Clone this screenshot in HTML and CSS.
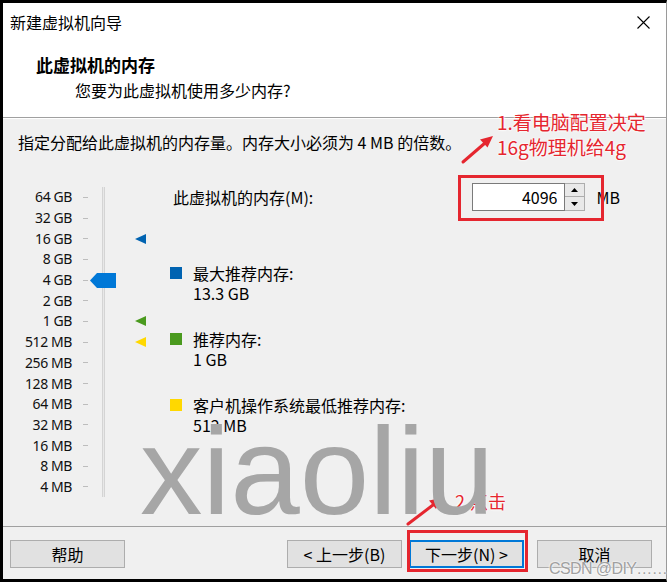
FILE: index.html
```html
<!DOCTYPE html>
<html lang="zh-CN">
<head>
    <meta charset="UTF-8">
    <meta name="viewport" content="width=device-width, initial-scale=1.0">
    <title>新建虚拟机向导</title>
    <link rel="stylesheet" href="styles.css">
</head>
<body>
<div class="stage">

    <div class="window">
        <div class="title-bar">
            <span class="title">新建虚拟机向导</span>
            <svg class="close" width="13" height="13" viewBox="0 0 13 13">
                <path d="M0.5 0.5 L12.5 12.5 M12.5 0.5 L0.5 12.5" stroke="#000" stroke-width="1.1" fill="none"/>
            </svg>
        </div>

        <div class="header">
            <h1>此虚拟机的内存</h1>
            <p>您要为此虚拟机使用多少内存?</p>
        </div>

        <div class="content">
            <p class="intro">指定分配给此虚拟机的内存量。内存大小必须为 4 MB 的倍数。</p>

            <div class="main">
                <!-- 滑块刻度 -->
                <div class="scale">
                    <div class="row"><span class="label">64 GB</span><span class="tick"></span><span class="track"></span><span class="marker"></span></div>
                    <div class="row"><span class="label">32 GB</span><span class="tick"></span><span class="track"></span><span class="marker"></span></div>
                    <div class="row"><span class="label">16 GB</span><span class="tick"></span><span class="track"></span>
                        <span class="marker"><svg width="11" height="10" viewBox="0 0 11 10"><polygon points="0,5 11,0 11,10" fill="#0063b1"/></svg></span></div>
                    <div class="row"><span class="label">8 GB</span><span class="tick"></span><span class="track"></span><span class="marker"></span></div>
                    <div class="row"><span class="label">4 GB</span><span class="tick"></span>
                        <span class="track"><svg class="thumb" width="26" height="15" viewBox="0 0 26 15"><polygon points="0,7.5 7,0 26,0 26,15 7,15" fill="#0078d7"/></svg></span>
                        <span class="marker"></span></div>
                    <div class="row"><span class="label">2 GB</span><span class="tick"></span><span class="track"></span><span class="marker"></span></div>
                    <div class="row"><span class="label">1 GB</span><span class="tick"></span><span class="track"></span>
                        <span class="marker"><svg width="11" height="10" viewBox="0 0 11 10"><polygon points="0,5 11,0 11,10" fill="#4a9a1e"/></svg></span></div>
                    <div class="row"><span class="label">512 MB</span><span class="tick"></span><span class="track"></span>
                        <span class="marker"><svg width="11" height="10" viewBox="0 0 11 10"><polygon points="0,5 11,0 11,10" fill="#ffd800"/></svg></span></div>
                    <div class="row"><span class="label">256 MB</span><span class="tick"></span><span class="track"></span><span class="marker"></span></div>
                    <div class="row"><span class="label">128 MB</span><span class="tick"></span><span class="track"></span><span class="marker"></span></div>
                    <div class="row"><span class="label">64 MB</span><span class="tick"></span><span class="track"></span><span class="marker"></span></div>
                    <div class="row"><span class="label">32 MB</span><span class="tick"></span><span class="track"></span><span class="marker"></span></div>
                    <div class="row"><span class="label">16 MB</span><span class="tick"></span><span class="track"></span><span class="marker"></span></div>
                    <div class="row"><span class="label">8 MB</span><span class="tick"></span><span class="track"></span><span class="marker"></span></div>
                    <div class="row"><span class="label">4 MB</span><span class="tick"></span><span class="track"></span><span class="marker"></span></div>
                </div>

                <div class="details">
                    <div class="memory-row">
                        <span class="memory-label">此虚拟机的内存(M):</span>
                        <div class="spin">
                            <input class="spin-input" type="text" value="4096">
                            <div class="spin-buttons">
                                <span class="spin-btn"><svg width="7" height="4" viewBox="0 0 7 4"><polygon points="0,4 3.5,0 7,4" fill="#000"/></svg></span>
                                <span class="spin-btn"><svg width="7" height="4" viewBox="0 0 7 4"><polygon points="0,0 7,0 3.5,4" fill="#000"/></svg></span>
                            </div>
                        </div>
                        <span class="unit">MB</span>
                    </div>

                    <div class="legend">
                        <div class="legend-item">
                            <span class="swatch swatch-max"></span>
                            <div><p>最大推荐内存:</p><p>13.3 GB</p></div>
                        </div>
                        <div class="legend-item">
                            <span class="swatch swatch-rec"></span>
                            <div><p>推荐内存:</p><p>1 GB</p></div>
                        </div>
                        <div class="legend-item">
                            <span class="swatch swatch-min"></span>
                            <div><p>客户机操作系统最低推荐内存:</p><p>512 MB</p></div>
                        </div>
                    </div>
                </div>
            </div>
        </div>

        <div class="footer">
            <button class="btn">帮助</button>
            <div class="nav-group">
                <button class="btn">&lt; 上一步(B)</button>
                <button class="btn btn-default">下一步(N) &gt;</button>
                <button class="btn btn-cancel">取消</button>
            </div>
        </div>
    </div>

    <!-- 标注 -->
    <div class="note note-one">1.看电脑配置决定<br>16g物理机给4g</div>
    <div class="note note-two">2.点击</div>
    <div class="mark-box box-memory"></div>
    <div class="mark-box box-next"></div>
    <svg class="arrows" width="670" height="582" viewBox="0 0 670 582">
        <line x1="463" y1="162" x2="485" y2="143" stroke="#e5262f" stroke-width="3" stroke-linecap="round"/>
        <polygon points="493,136 487.5,147.5 480,139.5" fill="#e5262f"/>
        <line x1="408" y1="524" x2="433" y2="505" stroke="#e5262f" stroke-width="3" stroke-linecap="round"/>
        <polygon points="441,498 436,509 429,500.5" fill="#e5262f"/>
    </svg>
    <div class="watermark">xiaoliu</div>
    <div class="csdn">CSDN @DIY……</div>

</div>
</body>
</html>
```

FILE: styles.css
```css
:root {
    --window-bg: #f0f0f0;
    --white: #ffffff;
    --line-color: #a0a0a0;
    --button-bg: #e1e1e1;
    --button-border: #adadad;
    --accent: #0078d7;
    --mark-red: #e5262f;
    --font-ui: "Noto Sans CJK SC", "Noto Sans", sans-serif;
}
html, body {
    margin: 0;
    background-color: var(--white);
    font-family: var(--font-ui);
    color: #000;
}
.stage {
    position: relative;
    width: 670px;
    height: 582px;
    overflow: hidden;
}

/* --- VENTANA --- */
.window {
    box-sizing: border-box;
    width: 667px;
    height: 582px;
    border: 3px solid #000;
    border-right: 1px solid #9a9a9a;
    display: flex;
    flex-direction: column;
    background-color: var(--window-bg);
}
.title-bar {
    height: 38px;
    flex: none;
    display: flex;
    align-items: center;
    justify-content: space-between;
    padding: 0 16px 0 7px;
    background-color: var(--white);
    font-size: 16px;
}
.close {
    display: block;
}
.header {
    flex: none;
    padding: 13px 0 16px 33px;
    background-color: var(--white);
    border-bottom: 1px solid var(--line-color);
}
.header h1 {
    margin: 0;
    font-size: 17px;
    font-weight: bold;
    line-height: 22px;
}
.header p {
    margin: 3px 0 0 39px;
    font-size: 16px;
    line-height: 22px;
}

/* --- CONTENIDO --- */
.content {
    flex: 1;
    border-top: 1px solid var(--white);
    padding: 12px 0 0 15px;
    font-size: 16px;
}
.intro {
    margin: 0;
    line-height: 22px;
}
.main {
    display: flex;
    margin-top: 30px;
}
.scale {
    flex: none;
    width: 152px;
    padding-top: 4px;
}
.row {
    display: grid;
    grid-template-columns: 54px 18px 26px 30px;
    height: 20.7px;
    align-items: center;
}
.label {
    text-align: right;
    font-family: "Noto Sans", sans-serif;
    font-size: 14px;
    letter-spacing: -0.4px;
    line-height: 1;
    white-space: nowrap;
    color: #111;
}
.tick {
    width: 5px;
    height: 1px;
    margin-left: 11px;
    background-color: #bdbdbd;
}
.track {
    height: 100%;
    display: flex;
    align-items: center;
    background: linear-gradient(to right,
        transparent 12px, #d4d4d4 12px, #d4d4d4 13px,
        #e8e8e8 13px, #e8e8e8 14px,
        #d4d4d4 14px, #d4d4d4 15px, transparent 15px);
}
.thumb,
.marker svg {
    display: block;
}
.marker {
    padding-left: 19px;
}
.details {
    flex: 1;
}
.memory-row {
    display: flex;
    align-items: center;
    height: 28px;
    padding: 0 46px 0 3px;
}
.spin {
    margin-left: auto;
    display: flex;
    height: 28px;
}
.spin-input {
    box-sizing: border-box;
    width: 93px;
    height: 28px;
    margin: 0;
    padding: 0 7px 0 0;
    border: 1px solid #7a7a7a;
    background-color: var(--white);
    font-family: var(--font-ui);
    font-size: 16px;
    text-align: right;
    color: #000;
}
.spin-buttons {
    display: flex;
    flex-direction: column;
    width: 20px;
}
.spin-btn {
    box-sizing: border-box;
    height: 14px;
    display: flex;
    align-items: center;
    justify-content: center;
    border: 1px solid var(--button-border);
    border-left: none;
    background-color: #e9e9e9;
}
.spin-btn + .spin-btn {
    border-top: none;
}
.unit {
    margin-left: 11px;
}
.legend {
    display: flex;
    flex-direction: column;
    gap: 26px;
    margin-top: 52px;
}
.legend-item {
    display: flex;
    gap: 11px;
}
.legend-item p {
    margin: 0;
    line-height: 20px;
}
.swatch {
    flex: none;
    width: 12px;
    height: 12px;
    margin-top: 4px;
}
.swatch-max { background-color: #0063b1; }
.swatch-rec { background-color: #4a9a1e; }
.swatch-min { background-color: #ffd800; }

/* --- BOTONES --- */
.footer {
    flex: none;
    display: flex;
    justify-content: space-between;
    padding: 13px 14px 11px 7px;
    border-top: 1px solid var(--line-color);
}
.nav-group {
    display: flex;
    gap: 7px;
}
.btn {
    box-sizing: border-box;
    width: 115px;
    height: 28px;
    padding: 0;
    border: 1px solid var(--button-border);
    background-color: var(--button-bg);
    font-family: var(--font-ui);
    font-size: 16px;
    color: #000;
}
.btn-default {
    border: 2px solid var(--accent);
}
.btn-cancel {
    margin-left: 6px;
}

/* --- ANOTACIONES --- */
.note {
    position: absolute;
    color: var(--mark-red);
    text-shadow: 0 0 2px #fff, 0 0 2px #fff, 0 0 3px #fff;
    white-space: nowrap;
}
.note-one {
    left: 497px;
    top: 109px;
    font-size: 19px;
    line-height: 25px;
}
.note-two {
    left: 455px;
    top: 489px;
    font-size: 18px;
    line-height: 24px;
}
.mark-box {
    position: absolute;
    box-sizing: border-box;
    border: 3px solid var(--mark-red);
}
.box-memory {
    left: 458px;
    top: 175px;
    width: 146px;
    height: 46px;
}
.box-next {
    left: 407px;
    top: 530px;
    width: 121px;
    height: 42px;
}
.arrows {
    position: absolute;
    left: 0;
    top: 0;
}
.watermark {
    position: absolute;
    left: 140px;
    top: 408px;
    font-family: "Liberation Sans", Arial, sans-serif;
    font-size: 125px;
    line-height: 1;
    color: #a6a6a6;
}
.csdn {
    position: absolute;
    left: 549px;
    top: 559px;
    font-family: "Liberation Sans", Arial, sans-serif;
    font-size: 16px;
    letter-spacing: -0.6px;
    line-height: 20px;
    color: #a0a0a0;
    text-shadow: 0 0 2px #fff, 0 0 2px #fff;
}
```
